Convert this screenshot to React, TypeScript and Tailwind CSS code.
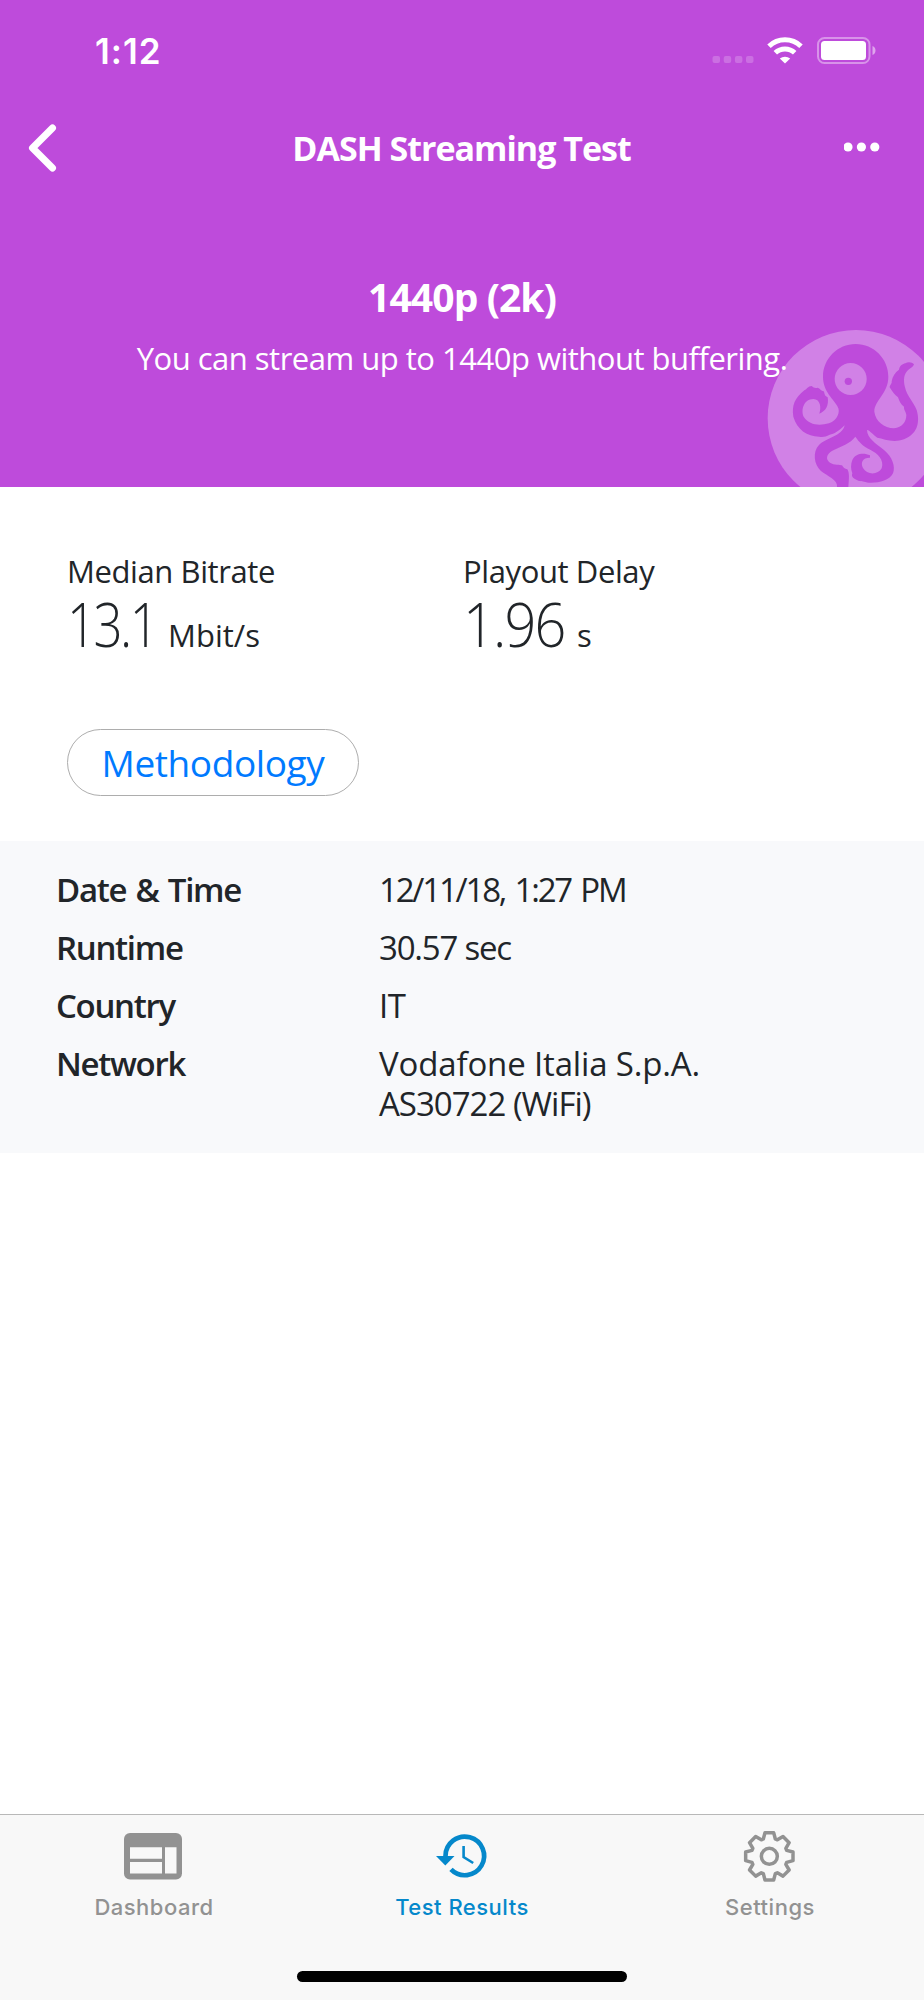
import { ReactNode } from 'react';

interface MetricProps {
  label: string;
  value: string;
  valueClass: string;
  unit: string;
}

interface TabProps {
  label: string;
  active?: boolean;
  children: ReactNode;
}

function StatusBar() {
  return (
    <div className="flex h-[88px] items-start justify-between pl-[95px] pr-[47px] pt-[26px]">
      <span className="font-['Inter',sans-serif] text-[35px] font-semibold leading-[50px] tracking-[1px]">
        1:12
      </span>
      <svg className="mt-[6px] h-10 w-[170px]" viewBox="0 0 170 40">
        {/* Signal */}
        <g fill="white" fillOpacity="0.2">
          <rect x="5.5" y="24" width="7.5" height="7" rx="2" />
          <rect x="16.7" y="24" width="7.5" height="7" rx="2" />
          <rect x="27.9" y="24" width="7.5" height="7" rx="2" />
          <rect x="39" y="24" width="7.5" height="7" rx="2" />
        </g>
        {/* Wifi */}
        <g fill="none" stroke="white" strokeWidth="5">
          <path d="M62 14.3a23 23 0 0 1 32 0" />
          <path d="M68.3 20.8a14 14 0 0 1 19.4 0" />
        </g>
        <path d="M72.8 26.6a8 8 0 0 1 10.4 0L78 31.6z" fill="white" />
        {/* Battery */}
        <rect x="111" y="6" width="51.5" height="25" rx="6.5" fill="none" stroke="white" strokeOpacity="0.4" strokeWidth="2" />
        <rect x="114" y="9" width="45" height="19" rx="3.5" fill="white" />
        <path d="M165.5 14c4 1.500 4 7.500 0 9z" fill="white" fillOpacity="0.5" />
      </svg>
    </div>
  );
}

function Octopus() {
  return (
    <svg className="absolute bottom-0 right-0 h-[177px] w-[180px]" viewBox="0 0 540 531">
      <circle cx="336" cy="325" r="265" fill="white" fillOpacity="0.3" />
      <path
        fill="#be4bdb"
        d="M335 102C389 102 433 146 433 200C433 251 391 270 391 305C395 335 420 353 450 355C475 352 487 335 487 315C486 304 479 300 480 290C470 283 466 274 462 262C452 255 445 245 437 232C437 225 445 221 443 214C446 198 453 188 465 179C468 166 476 162 484 160C493 154 505 157 510 163C508 171 500 173 495 178C478 191 478 212 483 232C488 257 509 277 518 300C527 330 525 370 480 388C445 400 420 386 400 383C390 378 378 361 369 360C370 385 395 400 420 420C445 440 455 470 447 490C435 513 405 519 375 518C358 516 355 513 345 513C332 508 320 502 325 490C320 478 320 462 325 450C335 429 360 428 378 436V443C358 442 348 455 357 474C368 495 402 496 413 475C422 450 400 430 380 420C355 408 345 395 334 380C320 400 290 410 265 422C248 432 243 447 258 458C270 466 289 463 294 466C298 473 302 477 310 478C317 490 315 507 313 531H279C283 510 250 498 230 482C210 464 205 425 225 405C245 385 295 378 302 346C285 362 270 373 257 374C245 380 238 382 225 380C190 379 160 360 148 320C143 285 152 265 182 240C188 239 192 228 203 228C208 233 214 235 221 233C228 235 231 243 239 244C243 251 240 257 251 262C255 285 246 304 226 311C232 293 230 268 208 267C180 267 169 300 180 322C195 345 225 348 255 340C280 331 290 305 281 290C270 268 237 245 237 200C237 146 281 102 335 102Z"
      />
      <circle cx="320" cy="207" r="48" fill="#d181e6" />
      <circle cx="313" cy="214" r="11" fill="#be4bdb" />
    </svg>
  );
}

function Header() {
  return (
    <header className="relative h-[487px] bg-[#be4bdb] text-white">
      <Octopus />
      <div className="relative">
        <StatusBar />
        <nav className="flex h-[120px] items-center justify-between pl-[28px] pr-[44px]">
          <svg className="h-12 w-8" viewBox="0 0 32 48" fill="none" stroke="white" strokeWidth="7" strokeLinecap="round" strokeLinejoin="round">
            <path d="M24.500 4L4.500 24l20 20" />
          </svg>
          <h1 className="ml-[19px] text-[34px] font-bold leading-[48px] tracking-[-1px]">DASH Streaming Test</h1>
          <svg className="h-3 w-9" viewBox="0 0 36 12" fill="white">
            <circle cx="4" cy="5" r="4.600" />
            <circle cx="17.400" cy="5" r="4.600" />
            <circle cx="30.800" cy="5" r="4.600" />
          </svg>
        </nav>
        <div className="flex flex-col items-center pt-[62px]">
          <p className="text-[39px] font-bold leading-[54px] tracking-[-0.9px]">1440p (2k)</p>
          <p className="mt-[12px] text-[31px] leading-[44px] tracking-[-0.5px]">
            You can stream up to 1440p without buffering.
          </p>
        </div>
      </div>
    </header>
  );
}

function Metric({ label, value, valueClass, unit }: MetricProps) {
  return (
    <div className="w-[396px]">
      <p className="text-[31px] leading-[40px] tracking-[-0.4px]">{label}</p>
      <p className="flex h-[66px] items-baseline gap-[14px] leading-[66px]">
        <span className={`text-[60px] font-light ${valueClass}`}>{value}</span>
        <span className="text-[31px]">{unit}</span>
      </p>
    </div>
  );
}

function Details() {
  const rows = [
    { label: 'Date & Time', lines: [{ text: '12/11/18, 1:27 PM', className: 'tracking-[-2.2px] [word-spacing:3px]' }] },
    { label: 'Runtime', lines: [{ text: '30.57 sec', className: 'tracking-[-1.2px]' }] },
    { label: 'Country', lines: [{ text: 'IT', className: 'tracking-[-0.4px]' }] },
    {
      label: 'Network',
      lines: [
        { text: 'Vodafone Italia S.p.A.', className: 'tracking-[-0.150px]' },
        { text: 'AS30722 (WiFi)', className: 'tracking-[-1px]' },
      ],
    },
  ];

  return (
    <dl className="flex h-[312px] flex-col gap-[18px] bg-[#f8f9fb] px-14 pt-[29px] text-[33px] leading-[40px]">
      {rows.map((row) => (
        <div key={row.label} className="flex">
          <dt className="w-[323px] font-semibold tracking-[-1.3px] [word-spacing:2px]">{row.label}</dt>
          <dd>
            {row.lines.map((line) => (
              <div key={line.text} className={line.className}>{line.text}</div>
            ))}
          </dd>
        </div>
      ))}
    </dl>
  );
}

function Tab({ label, active, children }: TabProps) {
  return (
    <div className={`flex flex-1 flex-col items-center pt-[13px] ${active ? 'text-[#0588cb]' : 'text-[#929292]'}`}>
      {children}
      <span className="mt-[8px] font-['Inter',sans-serif] text-[22px] font-medium leading-[30px] tracking-[0.5px]">
        {label}
      </span>
    </div>
  );
}

function GearIcon() {
  // Each tooth is the same four corners, turned by 45 degrees
  const corners = [[-18, -52], [-13, -71], [13, -71], [18, -52]];
  const points = Array.from({ length: 8 }, (_, i) => {
    const a = (i * Math.PI) / 4;
    return corners
      .map(([x, y]) => `${x * Math.cos(a) - y * Math.sin(a)},${x * Math.sin(a) + y * Math.cos(a)}`)
      .join(' ');
  }).join(' ');

  return (
    <svg className="h-[56px] w-[60px]" viewBox="-88 -85 180 168" fill="none" stroke="currentColor" strokeWidth="10.500" strokeLinejoin="round">
      <polygon points={points} />
      <circle r="24" />
    </svg>
  );
}

function TabBar() {
  return (
    <footer className="mt-auto flex h-[186px] flex-col border-t border-[#b8b8b8] bg-[#f8f8f8]">
      <div className="flex flex-1">
        <Tab label="Dashboard">
          <svg className="mr-[2px] h-[56px] w-[60px]" viewBox="0 0 60 56">
            <rect x="1" y="5" width="58" height="46.500" rx="6" fill="currentColor" />
            <path d="M7 19.300h32v11.400H7zM7 34h32v11.400H7zM42 19.300h11.500v26.100H42z" fill="#f8f8f8" />
          </svg>
        </Tab>
        <Tab label="Test Results" active>
          <svg className="h-[56px] w-[60px]" viewBox="0 0 60 56" fill="none" stroke="currentColor">
            <path d="M13.500 28a19.300 19.300 0 1 1 5.500 13.400" strokeWidth="4.700" />
            <path d="M4 28h18.500l-9.200 9.400z" fill="currentColor" stroke="none" />
            <path d="M31.600 18v11l9.600 6" strokeWidth="2.600" />
          </svg>
        </Tab>
        <Tab label="Settings">
          <GearIcon />
        </Tab>
      </div>
      <div className="mx-auto mb-[18px] h-[11px] w-[330px] rounded-full bg-black" />
    </footer>
  );
}

export default function App() {
  return (
    <div className="flex h-[2000px] w-[924px] flex-col overflow-hidden bg-white font-['Open_Sans','Noto_Sans',sans-serif] text-[#212529]">
      <Header />
      <main>
        <section className="flex h-[354px] flex-col items-start pl-[67px] pt-[64px]">
          <div className="flex">
            <Metric
              label="Median Bitrate"
              value="13.1"
              valueClass="mr-[-18px] origin-left scale-x-[0.85] tracking-[-3px]"
              unit="Mbit/s"
            />
            <Metric
              label="Playout Delay"
              value="1.96"
              valueClass="mr-[-9px] origin-left scale-x-[0.93] tracking-[-2px]"
              unit="s"
            />
          </div>
          <button className="mt-[72px] flex h-[67px] w-[292px] items-center justify-center rounded-full border border-[#adadad] text-[37px] tracking-[-0.4px] text-[#007aff]">
            Methodology
          </button>
        </section>
        <Details />
      </main>
      <TabBar />
    </div>
  );
}
